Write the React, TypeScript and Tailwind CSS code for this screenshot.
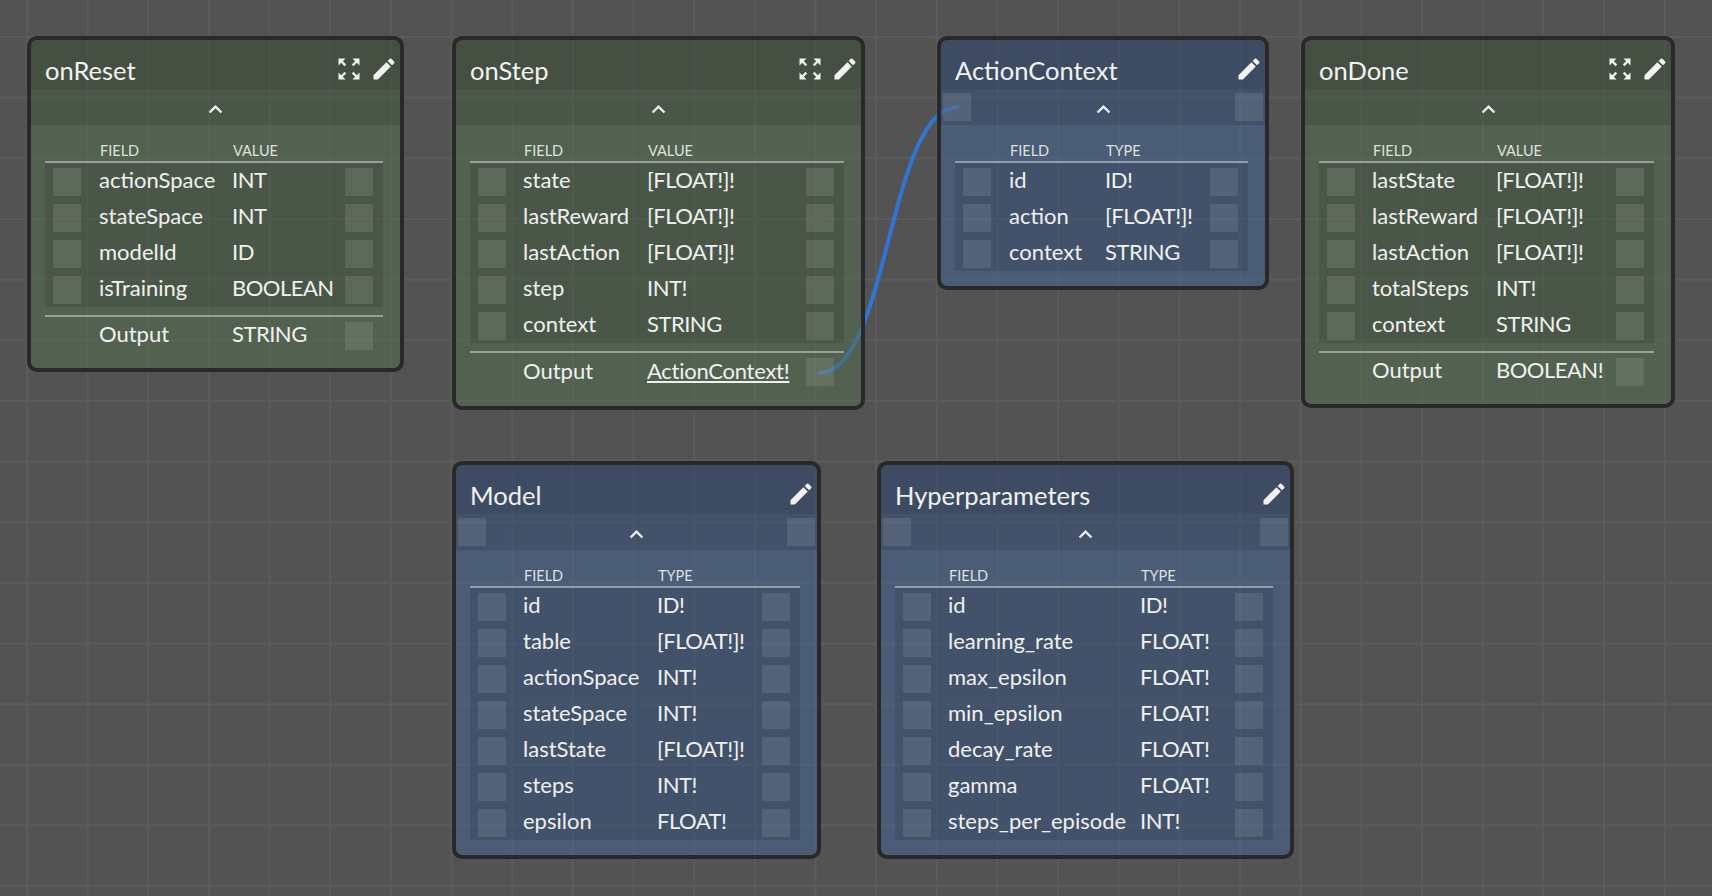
import React from "react";

const font = "font-['Lato','Noto_Sans',sans-serif]";

function Handle() {
  return <div className="w-[28px] h-[28px] bg-white/10" />;
}

function ExpandIcon() {
  return (
    <svg viewBox="0 0 24 24" className="w-[28px] h-[28px] fill-[#f2f2f2]">
      <path d="M15 3l2.3 2.3-2.89 2.87 1.42 1.42L18.7 6.7 21 9V3zM3 9l2.3-2.3 2.87 2.89 1.42-1.42L6.7 5.3 9 3H3zm6 12l-2.3-2.3 2.89-2.87-1.42-1.42L5.3 17.3 3 15v6zm12-6l-2.3 2.3-2.87-2.89-1.42 1.42 2.89 2.87L15 21h6z" />
    </svg>
  );
}

function EditIcon() {
  return (
    <svg viewBox="0 0 24 24" className="w-[28px] h-[28px] fill-[#f2f2f2]">
      <path d="M3 17.25V21h3.75L17.81 9.94l-3.75-3.75L3 17.25zM20.71 7.04c.39-.39.39-1.02 0-1.41l-2.34-2.34a.9959.9959 0 0 0-1.41 0l-1.83 1.83 3.75 3.75 1.83-1.83z" />
    </svg>
  );
}

function ChevronIcon() {
  return (
    <svg viewBox="0 0 24 24" className="w-[27px] h-[27px] fill-[#f2f2f2]">
      <path d="M12 8l-6 6 1.41 1.41L12 10.83l4.59 4.58L18 14z" />
    </svg>
  );
}

type NodeProps = {
  title: string;
  kind: "green" | "blue";
  pos: string;
  cols: string;
  head2: string;
  rows: [string, string][];
  output?: string;
  link?: boolean;
};

function Node({ title, kind, pos, cols, head2, rows, output, link }: NodeProps) {
  const blue = kind === "blue";
  return (
    <div
      className={`absolute ${pos} border-4 border-[#292929] rounded-[10px] overflow-hidden ${
        blue ? "bg-[rgba(65,101,153,0.5)]" : "bg-[rgba(83,112,79,0.5)]"
      }`}
    >
      <div className="h-[49px] flex items-start justify-between pl-[14px] pr-[2px] bg-black/[.17]">
        <span className="text-[25.5px] leading-[30px] text-[#f2f2f2] mt-[15px]">{title}</span>
        <div className="flex items-center gap-[7px] mt-[15px]">
          {!blue && <ExpandIcon />}
          <EditIcon />
        </div>
      </div>
      <div className="h-[36px] grid grid-cols-[28px_1fr_28px] items-center px-[2px] bg-black/10">
        {blue ? <Handle /> : <div />}
        <div className="flex justify-center mt-[5px]">
          <ChevronIcon />
        </div>
        {blue ? <Handle /> : <div />}
      </div>
      <div className="pl-[14px] pr-[17px] pb-[15px]">
        <div className={`grid ${cols} h-[36px] items-end text-[14.5px] leading-[20px] text-[#dfe1df]`}>
          <div />
          <div className="pl-[10px]">FIELD</div>
          <div className="pl-[10px]">{head2}</div>
          <div />
        </div>
        <div className="h-[2px] bg-white/40" />
        <div className="bg-black/10">
          {rows.map(([a, b]) => (
            <div key={a} className={`grid ${cols} h-[36px] items-center text-[22px] text-[#f0f0f0]`}>
              <div className="pl-[8px]">
                <Handle />
              </div>
              <div className="pl-[9px] pb-[4px] whitespace-nowrap">{a}</div>
              <div className="pl-[9px] pb-[4px] whitespace-nowrap tracking-[-0.5px]">{b}</div>
              <div className="flex justify-end pr-[10px]">
                <Handle />
              </div>
            </div>
          ))}
        </div>
        {output && (
          <>
            <div className="h-[2px] bg-white/40 mt-[8px]" />
            <div
              className={`grid ${cols} ${link ? "h-[38px]" : "h-[36px]"} items-center text-[22px] text-[#f0f0f0]`}
            >
              <div />
              <div className="pl-[9px] pb-[4px]">Output</div>
              <div
                className={`pl-[9px] pb-[4px] whitespace-nowrap ${
                  link ? "underline tracking-[-0.25px]" : "tracking-[-0.5px]"
                }`}
              >
                {output}
              </div>
              <div className="flex justify-end pr-[10px]">
                <Handle />
              </div>
            </div>
          </>
        )}
      </div>
    </div>
  );
}

export default function App() {
  return (
    <div
      className={`relative w-[1712px] h-[896px] overflow-hidden bg-[#535353] ${font} bg-[linear-gradient(to_right,#5b5b5b_2px,transparent_2px),linear-gradient(to_bottom,#5b5b5b_2px,transparent_2px)] bg-[size:60.67px_60.67px] bg-[position:26px_36px]`}
    >
      <svg className="absolute left-0 top-0 w-[1712px] h-[896px]" viewBox="0 0 1712 896" fill="none">
        <path d="M819 373 C 889 373, 888 107, 958 107" stroke="#3074d4" strokeWidth="4" />
      </svg>
      <Node
        title="onReset"
        kind="green"
        pos="left-[27px] top-[36px] w-[377px]"
        cols="grid-cols-[45px_133px_114px_1fr]"
        head2="VALUE"
        rows={[
          ["actionSpace", "INT"],
          ["stateSpace", "INT"],
          ["modelId", "ID"],
          ["isTraining", "BOOLEAN"],
        ]}
        output="STRING"
      />
      <Node
        title="onStep"
        kind="green"
        pos="left-[452px] top-[36px] w-[413px]"
        cols="grid-cols-[44px_124px_160px_1fr]"
        head2="VALUE"
        rows={[
          ["state", "[FLOAT!]!"],
          ["lastReward", "[FLOAT!]!"],
          ["lastAction", "[FLOAT!]!"],
          ["step", "INT!"],
          ["context", "STRING"],
        ]}
        output="ActionContext!"
        link
      />
      <Node
        title="ActionContext"
        kind="blue"
        pos="left-[937px] top-[36px] w-[332px]"
        cols="grid-cols-[45px_96px_105px_1fr]"
        head2="TYPE"
        rows={[
          ["id", "ID!"],
          ["action", "[FLOAT!]!"],
          ["context", "STRING"],
        ]}
      />
      <Node
        title="onDone"
        kind="green"
        pos="left-[1301px] top-[36px] w-[374px]"
        cols="grid-cols-[44px_124px_120px_1fr]"
        head2="VALUE"
        rows={[
          ["lastState", "[FLOAT!]!"],
          ["lastReward", "[FLOAT!]!"],
          ["lastAction", "[FLOAT!]!"],
          ["totalSteps", "INT!"],
          ["context", "STRING"],
        ]}
        output="BOOLEAN!"
      />
      <Node
        title="Model"
        kind="blue"
        pos="left-[452px] top-[461px] w-[369px]"
        cols="grid-cols-[44px_134px_106px_1fr]"
        head2="TYPE"
        rows={[
          ["id", "ID!"],
          ["table", "[FLOAT!]!"],
          ["actionSpace", "INT!"],
          ["stateSpace", "INT!"],
          ["lastState", "[FLOAT!]!"],
          ["steps", "INT!"],
          ["epsilon", "FLOAT!"],
        ]}
      />
      <Node
        title="Hyperparameters"
        kind="blue"
        pos="left-[877px] top-[461px] w-[417px]"
        cols="grid-cols-[44px_192px_95px_1fr]"
        head2="TYPE"
        rows={[
          ["id", "ID!"],
          ["learning_rate", "FLOAT!"],
          ["max_epsilon", "FLOAT!"],
          ["min_epsilon", "FLOAT!"],
          ["decay_rate", "FLOAT!"],
          ["gamma", "FLOAT!"],
          ["steps_per_episode", "INT!"],
        ]}
      />
    </div>
  );
}
